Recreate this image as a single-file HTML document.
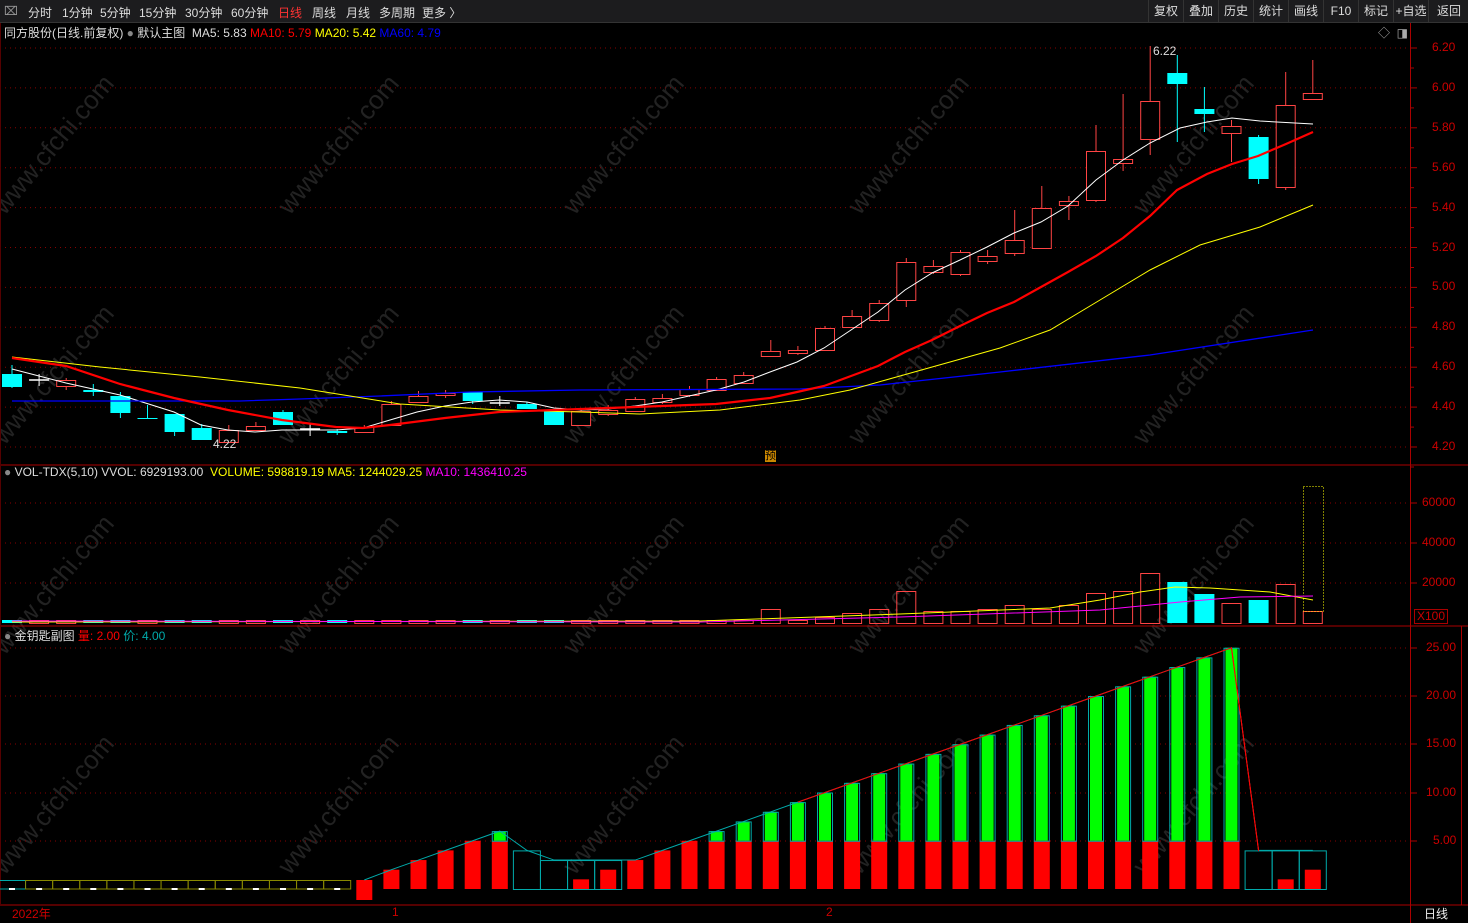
<!DOCTYPE html>
<html><head><meta charset="utf-8"><style>
body{margin:0;background:#000;width:1468px;height:923px;overflow:hidden;font-family:"Liberation Sans","Noto Sans CJK SC",sans-serif;}
#tb{position:absolute;left:0;top:0;width:1468px;height:22px;background:#1c1c1e;border-bottom:1px solid #333;font-size:12px;color:#ddd;}
#tb span{position:absolute;top:4px;}
.rb{position:absolute;top:0;height:22px;line-height:22px;border-left:1px solid #333;text-align:center;color:#ddd;font-size:12px}
.t{position:absolute;font-size:12px;white-space:nowrap}
svg{position:absolute;left:0;top:0}
</style></head><body>
<svg id="s" width="1468" height="923"></svg>
<div id="tb">
<span style="left:4px;color:#999">⌧</span>
<span style="left:28px">分时</span><span style="left:62px">1分钟</span><span style="left:100px">5分钟</span><span style="left:139px">15分钟</span><span style="left:185px">30分钟</span><span style="left:231px">60分钟</span><span style="left:278px;color:#f33">日线</span><span style="left:312px">周线</span><span style="left:346px">月线</span><span style="left:379px">多周期</span><span style="left:422px">更多 〉</span>
<div class="rb" style="left:1148px;width:34px">复权</div><div class="rb" style="left:1183px;width:34px">叠加</div><div class="rb" style="left:1218px;width:34px">历史</div><div class="rb" style="left:1253px;width:34px">统计</div><div class="rb" style="left:1288px;width:34px">画线</div><div class="rb" style="left:1323px;width:34px">F10</div><div class="rb" style="left:1358px;width:34px">标记</div><div class="rb" style="left:1393px;width:34px">+自选</div><div class="rb" style="left:1428px;width:40px">返回</div>
</div>
<div class="t" style="left:4px;top:24px;color:#ddd">同方股份(日线.前复权) <span style="color:#888">●</span> 默认主图 &nbsp;MA5: 5.83 <span style="color:#f00">MA10: 5.79</span> <span style="color:#ff0">MA20: 5.42</span> <span style="color:#00f">MA60: 4.79</span></div>
<div class="t" style="left:1378px;top:24px;color:#aaa">◇ &nbsp;◨</div>
<div class="t" style="left:4px;top:465px;color:#ddd"><span style="color:#888">●</span> VOL-TDX(5,10) VVOL: 6929193.00 &nbsp;<span style="color:#ff0">VOLUME: 598819.19 MA5: 1244029.25</span> <span style="color:#f0f">MA10: 1436410.25</span></div>
<div class="t" style="left:4px;top:627px;color:#ddd"><span style="color:#888">●</span> 金钥匙副图 <span style="color:#f00">量: 2.00</span> <span style="color:#0aa">价: 4.00</span></div>
<div class="t" style="left:1153px;top:44px;color:#ddd">6.22</div>
<div class="t" style="left:213px;top:437px;color:#ddd">4.22</div>
<div class="t" style="left:765px;top:450px;font-size:11px;background:#c80;color:#000;line-height:12px">预</div>
<div class="t" style="left:12px;top:905px;color:#c00">2022年</div>
<div class="t" style="left:392px;top:905px;color:#c00">1</div>
<div class="t" style="left:826px;top:905px;color:#c00">2</div>
<div class="t" style="left:1424px;top:905px;color:#eee">日线</div>
<div class="t" style="left:1414px;top:609px;color:#c00;border:1px solid #a00;padding:0 2px;line-height:13px">X100</div>
<div id="lab"></div>
<script>
var s=document.getElementById('s'),h='';
function X(i){return 12+i*27.1}
function L(x1,y1,x2,y2,c,w,d){h+='<line x1="'+x1+'" y1="'+y1+'" x2="'+x2+'" y2="'+y2+'" stroke="'+c+'" stroke-width="'+(w||1)+'"'+(d?' stroke-dasharray="'+d+'"':'')+'/>'}
function R(x,y,w,hh,f,st){h+='<rect x="'+x+'" y="'+y+'" width="'+w+'" height="'+Math.max(hh,1)+'" fill="'+(f||'none')+'"'+(st?' stroke="'+st+'"':'')+'/>'}
function P(pts,c,w){h+='<polyline fill="none" stroke="'+c+'" stroke-width="'+w+'" points="'+pts.map(p=>p.join(',')).join(' ')+'"/>'}
[[60,150],[345,150],[630,150],[915,150],[1200,150],[60,380],[345,380],[630,380],[915,380],[1200,380],[60,590],[345,590],[630,590],[915,590],[1200,590],[60,810],[345,810],[630,810],[915,810],[1200,810]].forEach(p=>{h+='<text x="'+p[0]+'" y="'+p[1]+'" fill="#222" font-size="26" font-family="Liberation Sans" transform="rotate(-50 '+p[0]+' '+p[1]+')" text-anchor="middle">www.cfchi.com</text>'});
for(var k=0;k<11;k++){L(0,48+k*39.9,1410,48+k*39.9,'#800','1','1 4')}
[503,543,583].forEach(y=>L(0,y,1410,y,'#800',1,'1 4'));
[648,696,744,793,841].forEach(y=>L(0,y,1410,y,'#800',1,'1 4'));
L(0,465,1468,465,'#a00',1);L(0,626,1468,626,'#a00',1);L(0,905,1468,905,'#a00',1);
L(1410.5,22,1410.5,923,'#a00',1);L(1461.5,626,1461.5,905,'#a00',1);L(0.5,22,0.5,905,'#500',1);
var lab='';
['6.20','6.00','5.80','5.60','5.40','5.20','5.00','4.80','4.60','4.40','4.20'].forEach((t,k)=>{var y=48+k*39.9;L(1410,y,1417,y,'#a00');L(1410,y+20,1414,y+20,'#a00');lab+='<div class="t" style="left:1432px;top:'+(y-8)+'px;color:#c00">'+t+'</div>'});
[['60000',503],['40000',543],['20000',583]].forEach(a=>{L(1410,a[1],1417,a[1],'#a00');lab+='<div class="t" style="left:1422px;top:'+(a[1]-8)+'px;color:#c00">'+a[0]+'</div>'});
[['25.00',648],['20.00',696],['15.00',744],['10.00',793],['5.00',841]].forEach(a=>{L(1410,a[1],1417,a[1],'#a00');lab+='<div class="t" style="left:'+(a[0].length>4?1426:1433)+'px;top:'+(a[1]-8)+'px;color:#c00">'+a[0]+'</div>'});
document.getElementById('lab').innerHTML=lab;
var C=[[0,374,387,365,388,'c'],[1,380,381,374,386,'w'],[2,380,386,378,390,'r'],[3,390,392,384,396,'c'],[4,396,413,392,418,'c'],[5,418,419,405,419,'c'],[6,414,432,414,436,'c'],[7,428,440,424,440,'c'],[8,430,442,425,442,'r'],[9,426,430,422,430,'r'],[10,412,425,410,425,'c'],[11,429,430,424,436,'w'],[12,431,433,429,435,'c'],[13,427,432,425,432,'r'],[14,404,425,401,425,'r'],[15,396,402,391,403,'r'],[16,393,395,390,398,'r'],[17,392,401,392,404,'c'],[18,403,404,396,406,'w'],[19,404,409,402,409,'c'],[20,411,425,410,425,'c'],[21,411,425,408,426,'r'],[22,410,414,405,416,'r'],[23,399,411,397,411,'r'],[24,398,402,394,404,'r'],[25,389,395,386,397,'r'],[26,379,390,377,390,'r'],[27,375,383,372,384,'r'],[28,351,356,340,357,'r'],[29,350,353,346,355,'r'],[30,328,350,326,350,'r'],[31,316,327,310,328,'r'],[32,303,320,300,322,'r'],[33,262,300,258,307,'r'],[34,266,272,260,274,'r'],[35,252,274,250,276,'r'],[36,256,261,250,264,'r'],[37,240,253,210,256,'r'],[38,208,248,186,249,'r'],[39,201,205,196,220,'r'],[40,151,200,125,202,'r'],[41,159,163,94,171,'r'],[42,101,139,46,155,'r'],[43,73,84,55,142,'c'],[44,109,114,87,132,'c'],[45,126,133,120,162,'r'],[46,137,179,135,184,'c'],[47,105,187,72,190,'r'],[48,93,99,60,100,'r']];
C.forEach(c=>{var x=X(c[0]),col=c[5]=='r'?'#f44':c[5]=='c'?'#0ff':'#fff';L(x,c[3],x,c[4],col);
 if(c[5]=='r')R(x-9.5,c[1]+.5,19,c[2]-c[1],'#000',col);else if(c[5]=='c')R(x-10,c[1],20,c[2]-c[1],col);else L(x-10,c[1],x+10,c[1],col,1.5)});
P([[12,369],[66,383],[120,395],[174,412],[201,425],[228,430],[255,432],[282,430],[336,430],[363,428],[390,420],[417,412],[445,406],[472,402],[499,400],[527,402],[554,408],[581,410],[608,409],[635,406],[662,402],[689,396],[716,390],[744,382],[770,372],[797,362],[824,348],[851,330],[878,312],[905,290],[932,273],[960,260],[987,247],[1014,233],[1041,222],[1068,206],[1096,180],[1123,160],[1150,143],[1180,128],[1207,122],[1232,118],[1260,121],[1313,124]],'#fff',1);
P([[12,401],[240,401],[300,399],[380,396],[470,392],[580,390],[800,389],[880,385],[1000,372],[1150,355],[1313,330]],'#00f',1.3);
P([[12,357],[100,367],[200,377],[300,388],[350,396],[400,404],[500,410],[580,412],[640,414],[720,410],[800,400],[850,390],[900,376],[950,362],[1000,348],[1050,330],[1100,300],[1150,270],[1200,245],[1230,236],[1260,227],[1313,205]],'#ff0',1);
P([[12,358],[66,366],[120,384],[174,398],[228,410],[282,420],[336,427],[363,428],[390,425],[445,418],[499,412],[554,410],[608,408],[662,406],[716,404],[770,398],[797,392],[824,386],[851,376],[878,366],[905,352],[932,340],[960,326],[987,313],[1014,302],[1041,287],[1068,272],[1096,256],[1123,238],[1150,216],[1177,190],[1207,174],[1232,164],[1258,156],[1286,144],[1313,132]],'#f00',2.2);
var V={28:7,30:3,31:5,32:7,33:16,34:6,35:6,36:7,37:9,38:7,39:9,40:15,41:16,42:25,43:20.5,44:14.5,45:10,46:11.5,47:19.5,48:6};
var cyanI={0:1,3:1,4:1,6:1,7:1,10:1,12:1,17:1,19:1,20:1,43:1,44:1,46:1};
for(var i=0;i<49;i++){var v=V[i]||1.5,hh=v*2,x=X(i),col=cyanI[i]?'#0ff':'#f44';if(cyanI[i])R(x-10,623-hh,20,hh,col);else R(x-9.5,623-hh+.5,19,hh,'none',col)}
h+='<rect x="1303.5" y="486.5" width="20" height="125" fill="none" stroke="#ff0" stroke-dasharray="1 2"/>';
P([[12,622],[700,621],[900,614],[1050,608],[1100,600],[1140,592],[1175,587],[1210,588],[1240,590],[1270,592],[1313,600]],'#ff0',1);
P([[12,621],[700,622],[900,617],[1100,610],[1180,602],[1240,597],[1313,596]],'#f0f',1);
function BY(v){return 889-v*9.65}
for(var i=0;i<13;i++){var x=X(i);R(x-13.5,880.5,27,8.5,'none',i==0?'#0aa':'#880');L(x-3,889,x+3,889,'#fff',2)}
var B={13:[-1,0],14:2,15:3,16:4,17:5,18:6,23:3,24:4,25:5};
for(var i=26;i<=45;i++)B[i]=i-20;
var pts=[];
for(var i=13;i<49;i++){var x=X(i),v=B[i];
 if(i==13){R(x-8,880,16,20,'#f00');pts.push([x,880]);continue}
 if(v!==undefined){var rt=Math.min(v,5);R(x-8,BY(rt),16,BY(0)-BY(rt),'#f00');if(v>5){R(x-6,BY(v),12,BY(5)-BY(v),'#0f0');R(x-7.5,BY(v)+.5,15,BY(5)-BY(v),'none','#0aa')}pts.push([x,BY(v)])}
 else{var tv={19:4,20:3,21:3,22:3,46:4,47:4,48:4}[i],rv={21:1,22:2,47:1,48:2}[i];R(x-13.5,BY(tv)+.5,27,BY(0)-BY(tv),'none','#0aa');if(rv)R(x-8,BY(rv),16,BY(0)-BY(rv),'#f00');pts.push([x,BY(tv)])}}
P(pts,'#0aa',1);P(pts.slice(16,34),'#f00',1);L(X(45),648,X(46),851,'#f00',1);
s.innerHTML=h;
</script>
</body></html>
